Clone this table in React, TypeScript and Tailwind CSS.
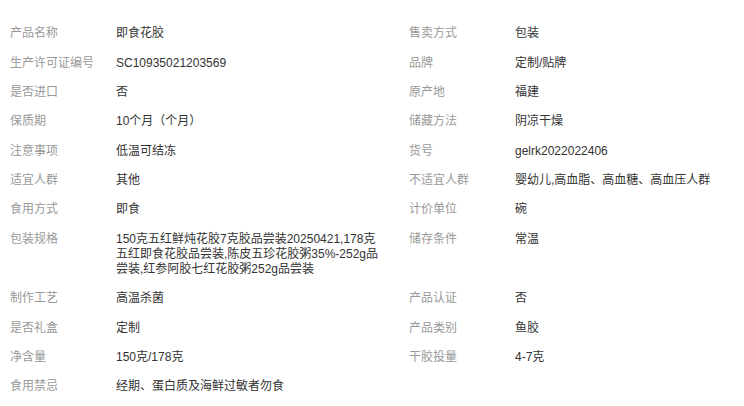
const ROWS: [string, string][] = [
  ["产品名称", "即食花胶"],
  ["售卖方式", "包装"],
  ["生产许可证编号", "SC10935021203569"],
  ["品牌", "定制/贴牌"],
  ["是否进口", "否"],
  ["原产地", "福建"],
  ["保质期", "10个月（个月）"],
  ["储藏方法", "阴凉干燥"],
  ["注意事项", "低温可结冻"],
  ["货号", "gelrk2022022406"],
  ["适宜人群", "其他"],
  ["不适宜人群", "婴幼儿,高血脂、高血糖、高血压人群"],
  ["食用方式", "即食"],
  ["计价单位", "碗"],
  ["包装规格", "150克五红鲜炖花胶7克胶品尝装20250421,178克五红即食花胶品尝装,陈皮五珍花胶粥35%-252g品尝装,红参阿胶七红花胶粥252g品尝装"],
  ["储存条件", "常温"],
  ["制作工艺", "高温杀菌"],
  ["产品认证", "否"],
  ["是否礼盒", "定制"],
  ["产品类别", "鱼胶"],
  ["净含量", "150克/178克"],
  ["干胶投量", "4-7克"],
  ["食用禁忌", "经期、蛋白质及海鲜过敏者勿食"],
];

export default function App() {
  return (
    <div className="min-h-screen bg-white pl-[10px] pt-[19px] text-[12px] leading-[15px] font-['Liberation_Sans','Noto_Sans_CJK_SC',sans-serif]">
      <div className="grid grid-cols-[399px_1fr]">
        {ROWS.map(([label, value]) => (
          <div key={label} className="flex py-[7.2px]">
            <div className="w-[106px] shrink-0 text-[#999]">{label}</div>
            <div className="min-w-0 flex-1 pr-[24px] break-all text-[#333]">{value}</div>
          </div>
        ))}
      </div>
    </div>
  );
}
